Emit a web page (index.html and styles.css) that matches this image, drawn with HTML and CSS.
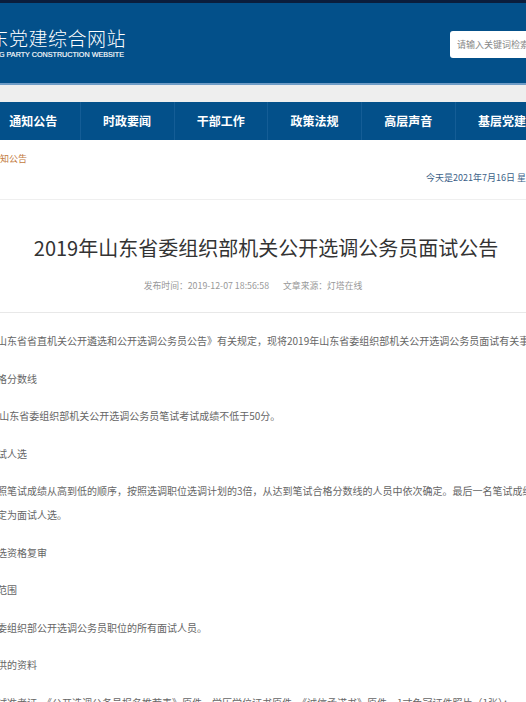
FILE: index.html
```html
<!DOCTYPE html>
<html lang="zh-CN">
<head>
    <meta charset="UTF-8">
    <meta name="viewport" content="width=device-width, initial-scale=1.0">
    <title>2019年山东省委组织部机关公开选调公务员面试公告</title>
    <link rel="stylesheet" href="styles.css">
</head>
<body>
    <div class="top-strip"></div>
    <div class="header">
        <div class="logo">
            <div class="logo-cn">山东党建综合网站</div>
            <div class="logo-en">SHANDONG PARTY CONSTRUCTION WEBSITE</div>
        </div>
        <div class="search">
            <input type="text" placeholder="请输入关键词检索">
        </div>
    </div>
    <div class="sub-band"></div>
    <div class="nav">
        <ul class="nav-list">
            <li>通知公告</li>
            <li>时政要闻</li>
            <li>干部工作</li>
            <li>政策法规</li>
            <li>高层声音</li>
            <li>基层党建</li>
            <li>理论学习</li>
        </ul>
    </div>

    <div class="main">
        <div class="location">
            <div class="crumb">首页 &gt; 通知公告</div>
            <div class="today">今天是2021年7月16日 星期五</div>
        </div>

        <div class="article-head">
            <h1>2019年山东省委组织部机关公开选调公务员面试公告</h1>
            <div class="meta">
                <span>发布时间：2019-12-07 18:56:58</span>
                <span>文章来源：灯塔在线</span>
            </div>
        </div>

        <div class="article-body">
            <p>根据《山东省省直机关公开遴选和公开选调公务员公告》有关规定，现将2019年山东省委组织部机关公开选调公务员面试有关事项公告如下：</p>
            <p>一、合格分数线</p>
            <p>2019年山东省委组织部机关公开选调公务员笔试考试成绩不低于50分。</p>
            <p>二、面试人选</p>
            <p class="indent">按照笔试成绩从高到低的顺序，按照选调职位选调计划的3倍，从达到笔试合格分数线的人员中依次确定。最后一名笔试成绩并列的人员<br>一并确定为面试人选。</p>
            <p>三、人选资格复审</p>
            <p>复审的范围</p>
            <p>山东省委组织部公开选调公务员职位的所有面试人员。</p>
            <p>需要提供的资料</p>
            <p>携带面试准考证、《公开选调公务员报名推荐表》原件、学历学位证书原件、《诚信承诺书》原件、1寸免冠证件照片（1张）；</p>
        </div>
    </div>
</body>
</html>
```

FILE: styles.css
```css
html, body {
    overflow: hidden;
}
body {
    margin: 0;
    font-family: "Noto Sans CJK SC", "Noto Sans", sans-serif;
    color: #666;
    background-color: #fff;
}
.top-strip {
    height: 3px;
    background-color: #0b1d3c;
}
.header {
    height: 80px;
    display: flex;
    align-items: center;
    background-color: #03508a;
    border-bottom: 2px solid #6f9cc6;
}
.logo {
    width: 190px;
    margin-left: -65px;
    display: flex;
    flex-direction: column;
    align-items: flex-end;
    color: white;
    white-space: nowrap;
}
.logo-cn {
    font-size: 19px;
    line-height: 22px;
    letter-spacing: 0.5px;
    margin-right: -1px;
    font-weight: 300;
}
.logo-en {
    font-family: "Liberation Sans", Arial, sans-serif;
    font-size: 7.2px;
    line-height: 9px;
    margin-top: 1px;
    margin-right: 1px;
    -webkit-text-stroke: 0.15px white;
}
.search {
    margin-left: auto;
    margin-right: -74px;
}
.search input {
    width: 150px;
    height: 27px;
    box-sizing: border-box;
    padding: 0 7px;
    border: none;
    border-radius: 3px;
    background-color: white;
    font-family: "Noto Sans CJK SC", sans-serif;
    font-size: 9px;
    outline: none;
}
.search input::placeholder {
    color: #888;
}
.sub-band {
    height: 17px;
    background-color: #eeeeee;
}
.nav {
    height: 38px;
    background-color: #03508a;
}
.nav-list {
    display: flex;
    margin: 0 0 0 -13px;
    padding: 0;
    list-style: none;
}
.nav-list li {
    flex: none;
    width: 93.75px;
    height: 38px;
    line-height: 38px;
    box-sizing: border-box;
    border-right: 1px solid #145d96;
    text-align: center;
    color: white;
    font-size: 12px;
    font-weight: bold;
}
.main {
    margin-left: -33px;
}
.location {
    width: 598px;
    padding: 13px 0 15px;
    border-bottom: 1px solid #efefef;
}
.crumb {
    margin-left: -3px;
    font-size: 9px;
    line-height: 12px;
    color: #c27a3e;
}
.today {
    margin-top: 7px;
    padding-right: 21px;
    text-align: right;
    font-size: 9px;
    line-height: 12px;
    color: #3b5f88;
}
.article-head {
    width: 598px;
    padding-bottom: 20px;
    border-bottom: 1px solid #e8e8e8;
    text-align: center;
}
.article-head h1 {
    margin: 35px 0 0;
    font-size: 20px;
    line-height: 26px;
    font-weight: normal;
    color: #333;
}
.meta {
    margin-top: 19px;
    padding-right: 26px;
    display: flex;
    justify-content: center;
    gap: 14px;
    font-size: 8.8px;
    line-height: 12px;
    color: #999;
}
.article-body {
    width: 900px;
    padding-top: 16px;
}
.article-body p {
    margin: 0 0 13.5px;
    font-size: 10px;
    line-height: 24px;
    color: #666;
}
.article-body .indent {
    text-indent: 2em;
}
```
